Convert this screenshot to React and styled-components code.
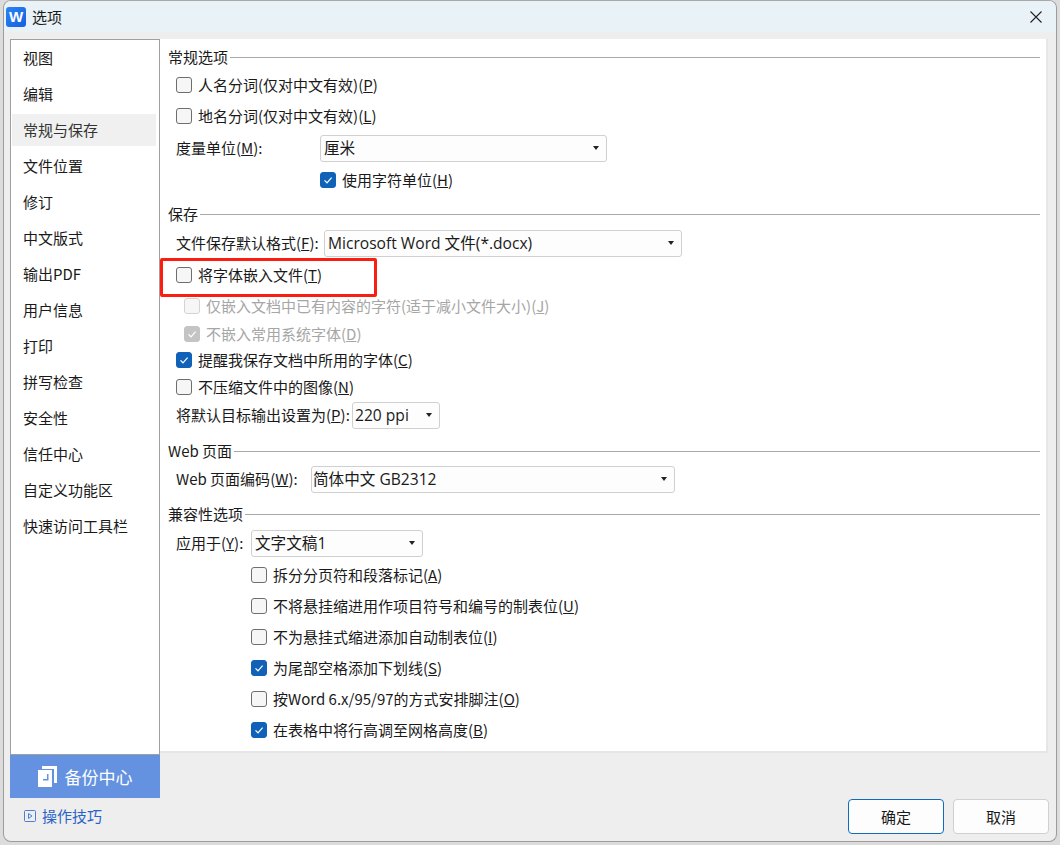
import React from 'react'
import styled, { createGlobalStyle } from 'styled-components'

const GlobalStyle = createGlobalStyle`
  html, body {
    margin: 0;
    padding: 0;
    height: 845px;
    overflow: hidden;
    background: #dcdcdc;
  }
  * {
    box-sizing: border-box;
  }
`

const Window = styled.div`
  position: relative;
  width: 1054px;
  height: 842px;
  margin-left: 3px;
  background: #eeeeee;
  border: 1px solid #9c9c9c;
  border-top-color: #a8a8a8;
  border-radius: 8px;
  overflow: hidden;
  color: #1a1a1a;
  font: 15px/24px 'Noto Sans CJK SC', 'Open Sans', sans-serif;
`

const TitleBar = styled.div`
  height: 31px;
  display: flex;
  align-items: center;
  padding: 0 14px 0 2px;
  background: #e9f3f7;
`

const Logo = styled.div`
  width: 20px;
  height: 20px;
  border-radius: 3px;
  background: linear-gradient(135deg, #2b83f6, #1560e0);
  color: #fff;
  font: bold 15px/20px 'Liberation Sans', sans-serif;
  text-align: center;
`

const TitleText = styled.div`
  margin-left: 6px;
  flex: 1;
`

const CloseBtn = styled.div`
  width: 12px;
  height: 12px;
  display: flex;
`

const Main = styled.div`
  display: flex;
  height: 766px;
  padding: 7px 8px 0 6px;
`

const LeftCol = styled.div`
  width: 150px;
  display: flex;
  flex-direction: column;
`

const Sidebar = styled.div`
  flex: 1;
  background: #fff;
  border: 1px solid #a0a0a0;
  padding: 0 3px 0 1px;
`

const NavItem = styled.div`
  height: 32px;
  margin: 2px 0 4px;
  padding-left: 11px;
  line-height: 32px;
  color: ${(p) => (p.$active ? '#333' : '#1a1a1a')};
  background: ${(p) => (p.$active ? '#f0f0f0' : 'transparent')};
`

const BackupBtn = styled.div`
  height: 43px;
  flex-shrink: 0;
  display: flex;
  align-items: center;
  justify-content: center;
  gap: 8px;
  background: #6492e0;
  color: #fff;
  font-size: 17px;
`

const Content = styled.div`
  flex: 1;
  height: 714px;
  background: #fff;
  border-right: 2px solid #e6e6e6;
  border-bottom: 2px solid #e6e6e6;
  padding: 6px 6px 0 8px;
`

const Heading = styled.div`
  display: flex;
  align-items: center;
  gap: 2px;
  height: 24px;
  margin-top: ${(p) => p.$mt || 0}px;
  &::after {
    content: '';
    flex: 1;
    height: 1px;
    background: #a8a8a8;
  }
`

const Row = styled.div`
  display: flex;
  align-items: center;
  height: 24px;
  margin-top: ${(p) => p.$mt ?? 7}px;
  padding-left: ${(p) => p.$indent || 8}px;
  color: ${(p) => (p.$disabled ? '#a6a6a6' : 'inherit')};
`

const Box = styled.span`
  width: 16px;
  height: 16px;
  flex-shrink: 0;
  margin-right: 6px;
  border-radius: 3px;
  display: flex;
  align-items: center;
  justify-content: center;
  border: 1px solid ${(p) => {
    if (p.$disabled) return p.$checked ? '#c4c4c4' : '#d4d4d4'
    return p.$checked ? '#0f62b8' : '#6e6e6e'
  }};
  background: ${(p) => {
    if (p.$checked) return p.$disabled ? '#c4c4c4' : '#0f62b8'
    return '#f6f6f6'
  }};
`

const FieldLabel = styled.span`
  width: ${(p) => p.$w}px;
  flex-shrink: 0;
`

const Select = styled.div`
  width: ${(p) => p.$w}px;
  height: 27px;
  flex-shrink: 0;
  display: flex;
  align-items: center;
  justify-content: space-between;
  padding: 0 7px 0 ${(p) => p.$pad}px;
  background: #fdfdfd;
  border: 1px solid #d0d0d0;
  border-radius: 3px;
  font: 15.6px/25px 'Open Sans', 'Noto Sans CJK SC', sans-serif;
  &::after {
    content: '';
    border: 3.5px solid transparent;
    border-top: 4px solid #222;
    border-bottom: 0;
  }
`

const RedBox = styled.div`
  position: absolute;
  left: 156px;
  top: 257px;
  width: 217px;
  height: 39px;
  border: 3px solid #fb1e10;
  border-radius: 2px;
`

const Footer = styled.div`
  display: flex;
  align-items: flex-start;
  padding: 1px 7px 0 20px;
`

const Tips = styled.div`
  display: flex;
  align-items: center;
  gap: 6px;
  margin-top: 5px;
  color: #2a63c8;
  flex: 1;
`

const Btn = styled.div`
  width: 96px;
  height: 35px;
  margin-left: 9px;
  line-height: 33px;
  text-align: center;
  background: #fdfdfd;
  border: 1px solid ${(p) => (p.$primary ? '#0f6cbd' : '#d0d0d0')};
  border-radius: 4px;
`

const Check = () => (
  <svg width="10" height="10" viewBox="0 0 10 10" fill="none" stroke="#fff" strokeWidth="1.2">
    <path d="M1.5 5.4 L4 7.8 L8.6 2.6" />
  </svg>
)

const Option = ({ label, hotkey, checked, disabled, indent, mt }) => (
  <Row $indent={indent} $mt={mt} $disabled={disabled}>
    <Box $checked={checked} $disabled={disabled}>{checked && <Check />}</Box>
    <span>{label}(<u>{hotkey}</u>)</span>
  </Row>
)

const Field = ({ label, hotkey, w, selectW, value, pad = 2, mt }) => (
  <Row $mt={mt}>
    <FieldLabel $w={w}>{label}(<u>{hotkey}</u>):</FieldLabel>
    <Select $w={selectW} $pad={pad}>{value}</Select>
  </Row>
)

const navItems = ['视图', '编辑', '常规与保存', '文件位置', '修订', '中文版式', '输出PDF', '用户信息', '打印', '拼写检查', '安全性', '信任中心', '自定义功能区', '快速访问工具栏']

const App = () => {
  return (
    <>
      <GlobalStyle />
      <Window>
        <TitleBar>
          <Logo>W</Logo>
          <TitleText>选项</TitleText>
          <CloseBtn>
            <svg width="12" height="12" viewBox="0 0 12 12" stroke="#222" strokeWidth="1.1">
              <path d="M0.5 0.5 L11.5 11.5 M11.5 0.5 L0.5 11.5" />
            </svg>
          </CloseBtn>
        </TitleBar>
        <Main>
          <LeftCol>
            <Sidebar>
              {navItems.map((item) => (
                <NavItem key={item} $active={item === '常规与保存'}>{item}</NavItem>
              ))}
            </Sidebar>
            <BackupBtn>
              <svg width="19" height="21" viewBox="0 0 19 21" fill="#fff">
                <path d="M4 0 H19 V17 H16 V3 H4 Z" />
                <path fillRule="evenodd" d="M0 4 H14 V21 H0 Z M9 8 V13 H5 V14.5 H10.5 V8 Z" />
              </svg>
              备份中心
            </BackupBtn>
          </LeftCol>
          <Content>
            <Heading>常规选项</Heading>
            <Option label="人名分词(仅对中文有效)" hotkey="P" mt={4} />
            <Option label="地名分词(仅对中文有效)" hotkey="L" />
            <Field label="度量单位" hotkey="M" w={144} selectW={287} value="厘米" pad={3} mt={8} />
            <Option label="使用字符单位" hotkey="H" indent={152} checked mt={8} />
            <Heading $mt={10}>保存</Heading>
            <Field label="文件保存默认格式" hotkey="F" w={148} selectW={358} value="Microsoft Word 文件(*.docx)" pad={3} mt={5} />
            <Option label="将字体嵌入文件" hotkey="T" mt={8} />
            <Option label="仅嵌入文档中已有内容的字符(适于减小文件大小)" hotkey="J" indent={16} disabled />
            <Option label="不嵌入常用系统字体" hotkey="D" indent={16} checked disabled mt={4} />
            <Option label="提醒我保存文档中所用的字体" hotkey="C" checked mt={2} />
            <Option label="不压缩文件中的图像" hotkey="N" mt={3} />
            <Field label="将默认目标输出设置为" hotkey="P" w={176} selectW={88} value="220 ppi" mt={4} />
            <Heading $mt={12}>Web 页面</Heading>
            <Field label="Web 页面编码" hotkey="W" w={135} selectW={364} value="简体中文 GB2312" pad={1} mt={4} />
            <Heading $mt={11}>兼容性选项</Heading>
            <Field label="应用于" hotkey="Y" w={75} selectW={172} value="文字文稿1" pad={3} mt={5} />
            <Option label="拆分分页符和段落标记" hotkey="A" indent={83} mt={8} />
            <Option label="不将悬挂缩进用作项目符号和编号的制表位" hotkey="U" indent={83} />
            <Option label="不为悬挂式缩进添加自动制表位" hotkey="I" indent={83} />
            <Option label="为尾部空格添加下划线" hotkey="S" indent={83} checked />
            <Option label="按Word 6.x/95/97的方式安排脚注" hotkey="O" indent={83} />
            <Option label="在表格中将行高调至网格高度" hotkey="B" indent={83} checked />
          </Content>
        </Main>
        <Footer>
          <Tips>
            <svg width="12" height="12" viewBox="0 0 12 12" fill="none" stroke="#4f7fd0">
              <rect x="0.5" y="0.5" width="11" height="11" rx="1" />
              <path d="M4.5 3.5 L8 6 L4.5 8.5 Z" />
            </svg>
            操作技巧
          </Tips>
          <Btn $primary>确定</Btn>
          <Btn>取消</Btn>
        </Footer>
        <RedBox />
      </Window>
    </>
  )
}

export default App
